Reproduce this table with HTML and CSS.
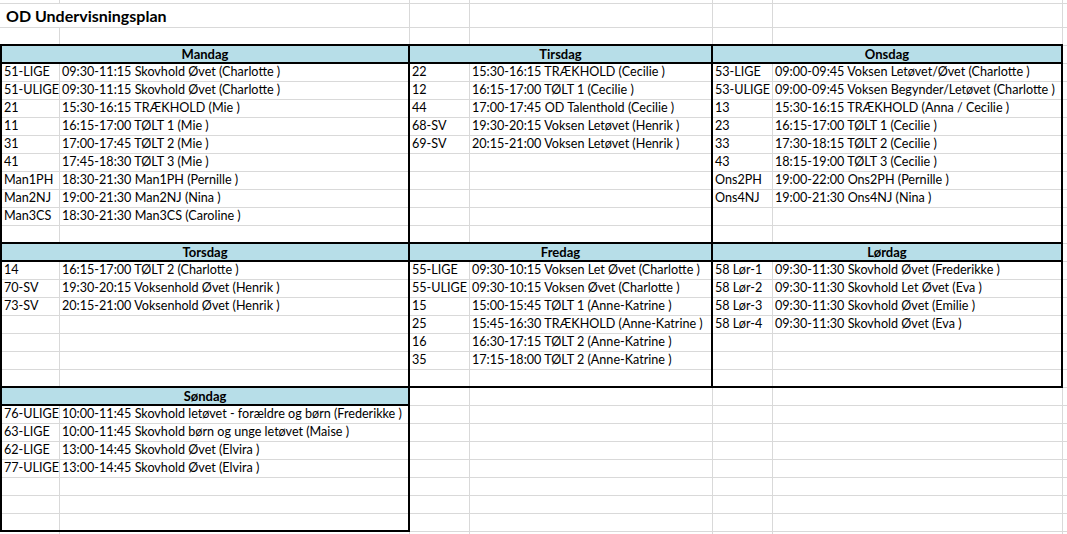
FILE: index.html
```html
<!DOCTYPE html>
<html lang="da">
<head>
<meta charset="utf-8">
<title>OD Undervisningsplan</title>
<link rel="stylesheet" href="styles.css">
</head>
<body>
<div class="sheet">
  <div class="sheet-top">
    <div class="title-row"><h1 class="title">OD Undervisningsplan</h1></div>
  </div>
  <div class="week">
    <section class="day day--first">
      <div class="day-head">Mandag</div>
      <div class="code">51-LIGE</div><div class="desc">09:30-11:15 Skovhold Øvet (Charlotte )</div>
      <div class="code">51-ULIGE</div><div class="desc">09:30-11:15 Skovhold Øvet (Charlotte )</div>
      <div class="code">21</div><div class="desc">15:30-16:15 TRÆKHOLD (Mie )</div>
      <div class="code">11</div><div class="desc">16:15-17:00 TØLT 1 (Mie )</div>
      <div class="code">31</div><div class="desc">17:00-17:45 TØLT 2 (Mie )</div>
      <div class="code">41</div><div class="desc">17:45-18:30 TØLT 3 (Mie )</div>
      <div class="code">Man1PH</div><div class="desc">18:30-21:30 Man1PH (Pernille )</div>
      <div class="code">Man2NJ</div><div class="desc">19:00-21:30 Man2NJ (Nina )</div>
      <div class="code">Man3CS</div><div class="desc">18:30-21:30 Man3CS (Caroline )</div>
      <div class="code"></div><div class="desc"></div>
    </section>
    <section class="day">
      <div class="day-head">Tirsdag</div>
      <div class="code">22</div><div class="desc">15:30-16:15 TRÆKHOLD (Cecilie )</div>
      <div class="code">12</div><div class="desc">16:15-17:00 TØLT 1 (Cecilie )</div>
      <div class="code">44</div><div class="desc">17:00-17:45 OD Talenthold (Cecilie )</div>
      <div class="code">68-SV</div><div class="desc">19:30-20:15 Voksen Letøvet (Henrik )</div>
      <div class="code">69-SV</div><div class="desc">20:15-21:00 Voksen Letøvet (Henrik )</div>
    </section>
    <section class="day">
      <div class="day-head">Onsdag</div>
      <div class="code">53-LIGE</div><div class="desc">09:00-09:45 Voksen Letøvet/Øvet (Charlotte )</div>
      <div class="code">53-ULIGE</div><div class="desc">09:00-09:45 Voksen Begynder/Letøvet (Charlotte )</div>
      <div class="code">13</div><div class="desc">15:30-16:15 TRÆKHOLD (Anna / Cecilie )</div>
      <div class="code">23</div><div class="desc">16:15-17:00 TØLT 1 (Cecilie )</div>
      <div class="code">33</div><div class="desc">17:30-18:15 TØLT 2 (Cecilie )</div>
      <div class="code">43</div><div class="desc">18:15-19:00 TØLT 3 (Cecilie )</div>
      <div class="code">Ons2PH</div><div class="desc">19:00-22:00 Ons2PH (Pernille )</div>
      <div class="code">Ons4NJ</div><div class="desc">19:00-21:30 Ons4NJ (Nina )</div>
    </section>

    <section class="day day--first">
      <div class="day-head">Torsdag</div>
      <div class="code">14</div><div class="desc">16:15-17:00 TØLT 2 (Charlotte )</div>
      <div class="code">70-SV</div><div class="desc">19:30-20:15 Voksenhold Øvet (Henrik )</div>
      <div class="code">73-SV</div><div class="desc">20:15-21:00 Voksenhold Øvet (Henrik )</div>
    </section>
    <section class="day">
      <div class="day-head">Fredag</div>
      <div class="code">55-LIGE</div><div class="desc">09:30-10:15 Voksen Let Øvet (Charlotte )</div>
      <div class="code">55-ULIGE</div><div class="desc">09:30-10:15 Voksen Øvet (Charlotte )</div>
      <div class="code">15</div><div class="desc">15:00-15:45 TØLT 1 (Anne-Katrine )</div>
      <div class="code">25</div><div class="desc">15:45-16:30 TRÆKHOLD (Anne-Katrine )</div>
      <div class="code">16</div><div class="desc">16:30-17:15 TØLT 2 (Anne-Katrine )</div>
      <div class="code">35</div><div class="desc">17:15-18:00 TØLT 2 (Anne-Katrine )</div>
    </section>
    <section class="day">
      <div class="day-head">Lørdag</div>
      <div class="code">58 Lør-1</div><div class="desc">09:30-11:30 Skovhold Øvet (Frederikke )</div>
      <div class="code">58 Lør-2</div><div class="desc">09:30-11:30 Skovhold Let Øvet (Eva )</div>
      <div class="code">58 Lør-3</div><div class="desc">09:30-11:30 Skovhold Øvet (Emilie )</div>
      <div class="code">58 Lør-4</div><div class="desc">09:30-11:30 Skovhold Øvet (Eva )</div>
    </section>

    <section class="day day--first">
      <div class="day-head">Søndag</div>
      <div class="code">76-ULIGE</div><div class="desc">10:00-11:45 Skovhold letøvet - forældre og børn (Frederikke )</div>
      <div class="code">63-LIGE</div><div class="desc">10:00-11:45 Skovhold børn og unge letøvet (Maise )</div>
      <div class="code">62-LIGE</div><div class="desc">13:00-14:45 Skovhold Øvet (Elvira )</div>
      <div class="code">77-ULIGE</div><div class="desc">13:00-14:45 Skovhold Øvet (Elvira )</div>
    </section>
  </div>
</div>
</body>
</html>
```

FILE: styles.css
```css
html, body {
  margin: 0;
  padding: 0;
  background: #fff;
}

.sheet {
  --grid: #d9d9d9;
  width: 1067px;
  height: 534px;
  overflow: hidden;
  font-family: Lato, "Liberation Sans", sans-serif;
  font-size: 12.6px;
  color: #000;
  background-color: #fff;
  background-image:
    linear-gradient(to right,
      transparent 0 59px, var(--grid) 59px 60px,
      transparent 60px 409px, var(--grid) 409px 410px,
      transparent 410px 469px, var(--grid) 469px 470px,
      transparent 470px 712px, var(--grid) 712px 713px,
      transparent 713px 772px, var(--grid) 772px 773px,
      transparent 773px 1062px, var(--grid) 1062px 1063px,
      transparent 1063px),
    repeating-linear-gradient(to bottom,
      transparent 0 9px, var(--grid) 9px 10px, transparent 10px 18px);
}

.sheet-top {
  height: 45px;
  box-sizing: border-box;
  padding-top: 3px;
}

.title-row {
  height: 24px;
  box-sizing: border-box;
  border-top: 1px solid var(--grid);
  background-color: #fff;
  background-image:
    linear-gradient(to right,
      transparent 0 409px, var(--grid) 409px 410px,
      transparent 410px 469px, var(--grid) 469px 470px,
      transparent 470px 712px, var(--grid) 712px 713px,
      transparent 713px 772px, var(--grid) 772px 773px,
      transparent 773px 1062px, var(--grid) 1062px 1063px,
      transparent 1063px);
}

.title {
  margin: 0;
  padding-left: 6px;
  font-size: 16px;
  font-weight: 700;
  line-height: 23px;
  white-space: nowrap;
}

.week {
  margin-left: 1px;
  display: grid;
  grid-template-columns: 408px 303px 350px;
  align-items: start;
}

.day {
  --code: 60px;
  display: grid;
  grid-template-columns: var(--code) 1fr;
  grid-template-rows: repeat(8, 18px);
  outline: 2px solid #000;
  outline-offset: -1px;
}

.day--first {
  --code: 58px;
}

.week > .day:nth-child(1),
.week > .day:nth-child(2),
.week > .day:nth-child(3) {
  grid-template-rows: repeat(11, 18px);
}

.day-head {
  grid-column: 1 / -1;
  background: #b7dee8;
  font-weight: 700;
  font-size: 13px;
  text-align: center;
  line-height: 18px;
  outline: 2px solid #000;
  outline-offset: -1px;
}

.code,
.desc {
  padding-left: 3px;
  line-height: 18px;
  white-space: nowrap;
}
```
